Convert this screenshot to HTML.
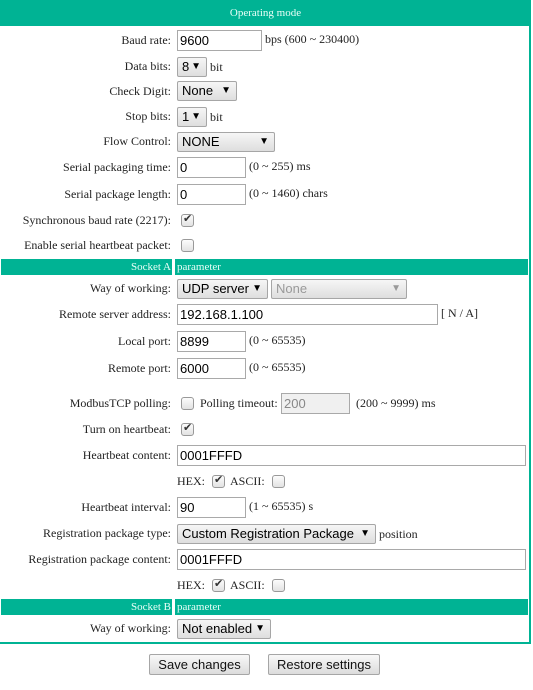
<!DOCTYPE html>
<html><head><style>
body{margin:0;width:533px;height:690px;background:#fff;position:relative;overflow:hidden;font-family:"Liberation Serif",serif;font-size:12px;color:#222}
div,span,input{position:absolute;box-sizing:border-box}
.l{right:362px;white-space:nowrap;line-height:16px}
.t{white-space:nowrap;line-height:16px}
.in{border:1px solid #a9a9a9;background:#fff;font:13px "Liberation Sans",sans-serif;color:#000;padding:2px 0 0 2px;height:21px;line-height:16px}
.sel{border:1px solid #a6a6a6;border-radius:2px;background:linear-gradient(#f6f6f6,#dedede);font:13px "Liberation Sans",sans-serif;color:#000;height:20px;line-height:18px;padding-left:4px;white-space:nowrap}
.sel i{position:absolute;right:5px;top:0;font-style:normal;font-size:10px}
.cb{width:13px;height:13px;border:1px solid #999;border-radius:3px;background:linear-gradient(#fcfcfc,#e2e2e2)}
.cb.on::after{content:"✔";position:absolute;left:1px;top:-3px;font-size:11px;color:#333}
.bar{background:#00b394;color:#e8fff8;height:16px;line-height:16px;font-size:11px}
.btn{border:1px solid #a6a6a6;border-radius:2px;background:linear-gradient(#f8f8f8,#dcdcdc);font:13px "Liberation Sans",sans-serif;color:#111;height:21px;line-height:19px;text-align:center}
</style></head><body>
<div style="left:0;top:0;width:531px;height:26px;background:#00b394;color:#eafff8;font-size:11px;text-align:center;line-height:26px">Operating mode</div>
<div style="left:529px;top:25px;width:2px;height:619px;background:#00b394"></div>
<div style="left:0;top:642px;width:531px;height:2px;background:#00b394"></div>

<div class="l" style="top:32px">Baud rate:</div><div class="in" style="left:177px;top:30px;width:85px">9600</div><div class="t" style="left:265px;top:31px">bps (600 ~ 230400)</div>
<div class="l" style="top:58px">Data bits:</div><div class="sel" style="left:177px;top:57px;width:30px">8<i>▼</i></div><div class="t" style="left:210px;top:59px">bit</div>
<div class="l" style="top:83px">Check Digit:</div><div class="sel" style="left:177px;top:81px;width:60px">None<i>▼</i></div>
<div class="l" style="top:108px">Stop bits:</div><div class="sel" style="left:177px;top:107px;width:30px">1<i>▼</i></div><div class="t" style="left:210px;top:109px">bit</div>
<div class="l" style="top:133px">Flow Control:</div><div class="sel" style="left:177px;top:132px;width:98px">NONE<i>▼</i></div>
<div class="l" style="top:159px">Serial packaging time:</div><div class="in" style="left:177px;top:157px;width:69px">0</div><div class="t" style="left:249px;top:158px">(0 ~ 255) ms</div>
<div class="l" style="top:186px">Serial package length:</div><div class="in" style="left:177px;top:184px;width:69px">0</div><div class="t" style="left:249px;top:185px">(0 ~ 1460) chars</div>
<div class="l" style="top:212px">Synchronous baud rate (2217):</div><div class="cb on" style="left:181px;top:214px"></div>
<div class="l" style="top:237px">Enable serial heartbeat packet:</div><div class="cb" style="left:181px;top:239px"></div>

<div class="bar" style="left:1px;top:259px;width:171px;text-align:right;padding-right:1px">Socket A</div>
<div class="bar" style="left:175px;top:259px;width:353px;padding-left:2px">parameter</div>
<div class="l" style="top:280px">Way of working:</div><div class="sel" style="left:177px;top:279px;width:91px">UDP server<i>▼</i></div>
<div class="sel" style="left:271px;top:279px;width:136px;color:#999">None<i style="color:#999">▼</i></div>
<div class="l" style="top:306px">Remote server address:</div><div class="in" style="left:177px;top:304px;width:261px">192.168.1.100</div><div class="t" style="left:441px;top:305px">[ N / A]</div>
<div class="l" style="top:333px">Local port:</div><div class="in" style="left:177px;top:331px;width:69px">8899</div><div class="t" style="left:249px;top:332px">(0 ~ 65535)</div>
<div class="l" style="top:360px">Remote port:</div><div class="in" style="left:177px;top:358px;width:69px">6000</div><div class="t" style="left:249px;top:359px">(0 ~ 65535)</div>
<div class="l" style="top:395px">ModbusTCP polling:</div><div class="cb" style="left:181px;top:397px"></div><div class="t" style="left:200px;top:395px">Polling timeout:</div>
<div class="in" style="left:281px;top:393px;width:69px;background:#f0f0f0;color:#888">200</div><div class="t" style="left:356px;top:395px">(200 ~ 9999) ms</div>
<div class="l" style="top:421px">Turn on heartbeat:</div><div class="cb on" style="left:181px;top:423px"></div>
<div class="l" style="top:447px">Heartbeat content:</div><div class="in" style="left:177px;top:445px;width:349px">0001FFFD</div>
<div class="t" style="left:177px;top:473px">HEX:</div><div class="cb on" style="left:212px;top:475px"></div><div class="t" style="left:230px;top:473px">ASCII:</div><div class="cb" style="left:272px;top:475px"></div>
<div class="l" style="top:499px">Heartbeat interval:</div><div class="in" style="left:177px;top:497px;width:69px">90</div><div class="t" style="left:249px;top:498px">(1 ~ 65535) s</div>
<div class="l" style="top:525px">Registration package type:</div><div class="sel" style="left:177px;top:524px;width:199px">Custom Registration Package<i>▼</i></div><div class="t" style="left:379px;top:526px">position</div>
<div class="l" style="top:551px">Registration package content:</div><div class="in" style="left:177px;top:549px;width:349px">0001FFFD</div>
<div class="t" style="left:177px;top:577px">HEX:</div><div class="cb on" style="left:212px;top:579px"></div><div class="t" style="left:230px;top:577px">ASCII:</div><div class="cb" style="left:272px;top:579px"></div>

<div class="bar" style="left:1px;top:599px;width:171px;text-align:right;padding-right:1px">Socket B</div>
<div class="bar" style="left:175px;top:599px;width:353px;padding-left:2px">parameter</div>
<div class="l" style="top:620px">Way of working:</div><div class="sel" style="left:177px;top:619px;width:94px">Not enabled<i>▼</i></div>

<div class="btn" style="left:149px;top:654px;width:101px">Save changes</div>
<div class="btn" style="left:268px;top:654px;width:112px">Restore settings</div>
</body></html>
